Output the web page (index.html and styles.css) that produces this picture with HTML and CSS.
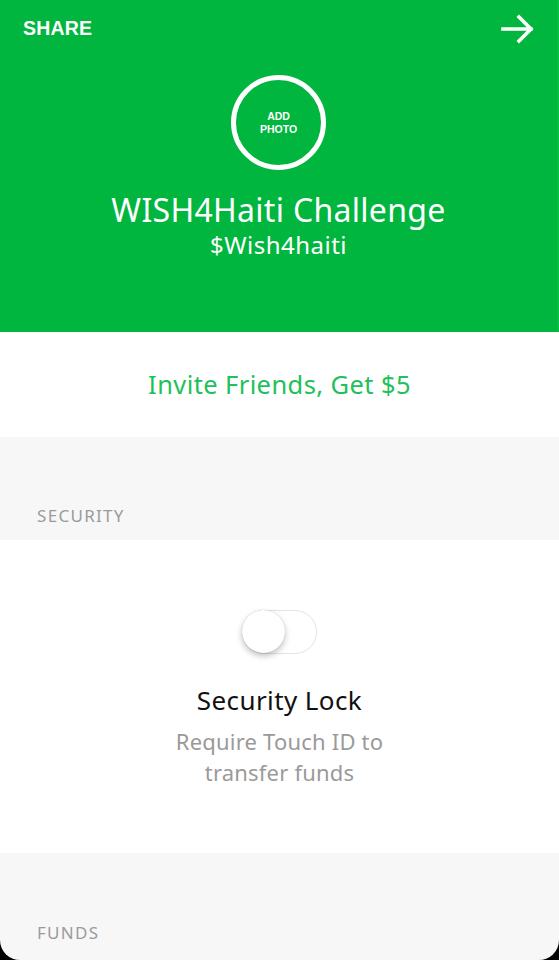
FILE: index.html
```html
<!DOCTYPE html>
<html>
<head>
<meta charset="utf-8">
<link rel="stylesheet" href="styles.css">
</head>
<body>
<div class="screen">
  <header class="hero">
    <div class="topbar">
      <span class="share">SHARE</span>
      <svg class="arrow" width="36" height="32" viewBox="0 0 36 32">
        <path d="M3 16 H31 M19 4 L31 16 L19 28" fill="none" stroke="#fff" stroke-width="3.6" stroke-linecap="square" stroke-linejoin="miter"/>
      </svg>
    </div>
    <div class="avatar"><span>ADD<br>PHOTO</span></div>
    <h1 class="name">WISH4Haiti Challenge</h1>
    <div class="tag">$Wish4haiti</div>
  </header>
  <section class="invite">Invite Friends, Get $5</section>
  <div class="section-label">SECURITY</div>
  <section class="security">
    <div class="toggle"><div class="knob"></div></div>
    <div class="sec-title">Security Lock</div>
    <div class="sec-desc">Require Touch ID to<br>transfer funds</div>
  </section>
  <div class="section-label funds">FUNDS</div>
</div>
</body>
</html>
```
FILE: styles.css
```css
html, body {
  margin: 0;
  padding: 0;
  background: #000;
}
.screen {
  width: 559px;
  height: 960px;
  overflow: hidden;
  background: #f7f7f7;
  border-radius: 0 0 20px 20px;
  font-family: "Noto Sans", "Open Sans", sans-serif;
  display: flex;
  flex-direction: column;
}
.hero {
  background: #01b63f;
  height: 332px;
  box-sizing: border-box;
  display: flex;
  flex-direction: column;
  align-items: center;
  color: #fff;
  border-right: 2px solid #05c040;
}
.topbar {
  align-self: stretch;
  display: flex;
  justify-content: space-between;
  align-items: center;
  padding: 13px 21px 0 23px;
  height: 32px;
}
.share {
  font-family: "Liberation Sans", Arial, sans-serif;
  font-weight: bold;
  font-size: 19.5px;
  letter-spacing: 0.2px;
  margin-top: -1px;
}
.arrow {
  display: block;
}
.avatar {
  margin-top: 30px;
  width: 95px;
  height: 95px;
  box-sizing: border-box;
  border: 5px solid #fff;
  border-radius: 50%;
  display: flex;
  align-items: center;
  justify-content: center;
  text-align: center;
}
.avatar span {
  font-family: "Liberation Sans", Arial, sans-serif;
  font-weight: bold;
  font-size: 10.5px;
  line-height: 13px;
  margin-top: 1px;
}
.name {
  margin: 24px 0 0;
  font-weight: normal;
  font-size: 32px;
  line-height: 32px;
  letter-spacing: 0.3px;
}
.tag {
  font-size: 24px;
  line-height: 28px;
  letter-spacing: 0.5px;
  margin-top: 5px;
}
.invite {
  background: #fff;
  height: 105px;
  display: flex;
  align-items: center;
  justify-content: center;
  color: #22c05a;
  font-size: 25.5px;
  letter-spacing: 0.4px;
  padding-bottom: 2px;
  box-sizing: border-box;
}
.section-label {
  height: 103px;
  box-sizing: border-box;
  display: flex;
  align-items: flex-end;
  padding: 0 0 13px 37px;
  color: #9b9b9b;
  font-size: 17px;
  letter-spacing: 1.3px;
}
.security {
  background: #fff;
  height: 313px;
  display: flex;
  flex-direction: column;
  align-items: center;
  box-sizing: border-box;
  padding-top: 70px;
}
.toggle {
  width: 75px;
  height: 44px;
  border-radius: 22px;
  box-sizing: border-box;
  border: 1.5px solid #e4e4e4;
  background: #fff;
  position: relative;
}
.knob {
  position: absolute;
  left: -1px;
  top: -1px;
  width: 43px;
  height: 43px;
  border-radius: 50%;
  background: #fff;
  box-shadow: 0 3px 6px rgba(0,0,0,0.25), 0 0 1px rgba(0,0,0,0.2);
}
.sec-title {
  margin-top: 29px;
  font-size: 26px;
  line-height: 34px;
  letter-spacing: 0.4px;
  color: #111;
}
.sec-desc {
  margin-top: 9px;
  font-size: 22px;
  line-height: 31px;
  letter-spacing: 0.2px;
  color: #9a9a9a;
  text-align: center;
}
.funds {
  height: 107px;
  padding-bottom: 16px;
}
```
